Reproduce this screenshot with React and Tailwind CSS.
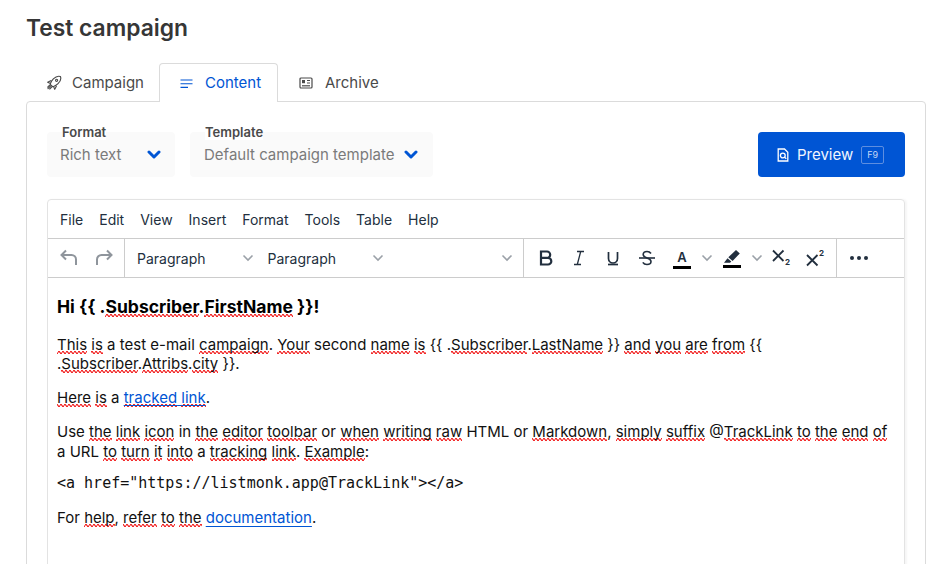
const Sp = ({ children }) => (
  <span className="bg-[url(data:image/svg+xml,%3Csvg%20xmlns=%27http://www.w3.org/2000/svg%27%20width=%274%27%20height=%273%27%3E%3Cpath%20d=%27M0%201.500Q1%20-.5%202%201.500T4%201.500%27%20fill=%27none%27%20stroke=%27%23f00000%27%20stroke-width=%271.1%27/%3E%3C/svg%3E)] bg-[length:4px_3px] bg-bottom bg-repeat-x">{children}</span>
);

function Field({ label, value, width, pad }) {
  return (
    <div className={`relative flex h-[45px] items-center justify-between rounded bg-[#fafafa] ${width} ${pad}`}>
      <span className="absolute left-[15px] top-[-8px] bg-white text-[13px] font-semibold leading-[16px] text-[#4a4a4a]">{label}</span>
      <span className="pt-[2px] text-[15px] text-[#7a7a7a]">{value}</span>
      <svg width="14" height="9" viewBox="0 0 14 9" fill="none" stroke="#0055d4" strokeWidth="3" strokeLinecap="round" strokeLinejoin="round">
        <path d="M2 2l5 5 5-5" />
      </svg>
    </div>
  );
}

function Caret({ cls = "" }) {
  return (
    <svg width="12" height="8" viewBox="0 0 12 8" className={cls} fill="none" stroke="#9ba1a8" strokeWidth="1.6">
      <path d="M1.500 1.500L6 6l4.500-4.500" />
    </svg>
  );
}

export default function App() {
  return (
    <div className="h-[564px] overflow-hidden bg-white font-['Inter',sans-serif] text-[#363636]">
      <div className="pl-[26px] pr-[16px] pt-[13px]">
        <h1 className="text-[22.8px] font-semibold leading-[30px]">Test campaign</h1>
        <div className="mt-[20px] flex h-[38px] items-stretch">
          <div className="flex w-[133px] items-center gap-[10px] pl-[20px] pt-[2px] text-[15px] text-[#4a4a4a]">
            <svg width="16" height="16" viewBox="0 0 24 24" fill="none" stroke="#4a4a4a" strokeWidth="1.700" strokeLinejoin="round" strokeLinecap="round">
              <path d="M21.610 2.390C21.610 2.390 16.660 .269 11 5.930C8.810 8.120 7.500 10.530 6.650 12.640C6.370 13.390 6.560 14.210 7.110 14.770L9.240 16.890C9.790 17.450 10.610 17.630 11.360 17.350C13.500 16.530 15.880 15.190 18.070 13C23.730 7.340 21.610 2.390 21.610 2.390Z" />
              <path d="M7 8.500L2.500 10.900 5.800 12.300M15.500 17L13.100 21.500 11.700 18.200" />
              <circle cx="15.900" cy="8" r="1.600" />
              <path d="M7 16.300L3 20.300M8.500 18L5.500 21M5.500 15.200L2.500 18.200" />
            </svg>
            <span>Campaign</span>
          </div>
          <div className="relative z-10 flex h-[39px] w-[119px] items-center gap-[12px] rounded-t border border-b-0 border-[#dbdbdb] bg-white pl-[20px] pt-[1px] text-[15px] text-[#0055d4]">
            <svg width="13" height="14" viewBox="0 0 13 14" stroke="#0055d4" strokeWidth="1.100"><path d="M0.500 3h12M0.500 6.700h12M0.500 10.400h7.500" /></svg>
            <span>Content</span>
          </div>
          <div className="flex items-center gap-[12px] pl-[21px] pt-[2px] text-[15px] text-[#4a4a4a]">
            <svg width="14" height="14" viewBox="0 0 14 14" fill="none" stroke="#4a4a4a" strokeWidth="1.200">
              <rect x="1" y="2" width="12" height="10" rx="1" />
              <path d="M3 9.800h8" />
              <path d="M8 4.500h3M8 7h3" />
              <rect x="3" y="4" width="3" height="3.200" fill="#4a4a4a" stroke="none" />
            </svg>
            <span>Archive</span>
          </div>
        </div>
        <div className="h-[470px] w-[900px] rounded-t border border-[#dbdbdb] pl-[20px] pr-[20px] pt-[30px]">
          <div className="flex items-start">
            <Field label="Format" value="Rich text" width="w-[128px]" pad="pl-[13px] pr-[14px]" />
            <div className="w-[15px]" />
            <Field label="Template" value="Default campaign template" width="w-[243px]" pad="pl-[14px] pr-[15px]" />
            <button className="ml-auto flex h-[45px] w-[147px] items-center rounded bg-[#0055d4] pl-[19px] text-[15px] text-[#f0f5ff]">
              <svg width="12" height="14" viewBox="0 0 12 14" fill="none" stroke="#ffffff" strokeWidth="1.300">
                <path d="M1.200 1h6.300l3.300 3.200v8.800H1.200z" />
                <circle cx="5.800" cy="7.500" r="2.400" />
                <path d="M7.500 9.200l1.800 1.600" />
              </svg>
              <span className="ml-[8px] pt-[1px]">Preview</span>
              <span className="ml-[8px] flex h-[18px] w-[23px] items-center justify-center rounded-[2px] border border-[#5d8ee0] text-[9px] text-[#c4d7f5]">F9</span>
            </button>
          </div>
          <div className="mt-[22px] h-[400px] rounded-t border border-[#e3e3e3] shadow-[2px_0_2px_rgba(0,0,0,0.04)]">
            <div className="flex h-[38px] items-center gap-[16px] pl-[12px] text-[14px] text-[#222f3e]">
              <span>File</span>
              <span>Edit</span>
              <span>View</span>
              <span>Insert</span>
              <span>Format</span>
              <span>Tools</span>
              <span>Table</span>
              <span>Help</span>
            </div>
            <div className="flex h-[40px] items-center border-y border-[#cccccc] text-[14px] text-[#222f3e]">
              <div className="flex h-full w-[77px] items-center gap-[11px] border-r border-[#cccccc] pl-[9px]">
                <svg width="24" height="24" viewBox="0 0 24 24" fill="none" stroke="#8f959c" strokeWidth="2"><path d="M9 4.500L4.500 9 9 13.500" /><path d="M5 9h9.500a4.500 4.500 0 0 1 4.500 4.500V19" /></svg>
                <svg width="24" height="24" viewBox="0 0 24 24" fill="none" stroke="#8f959c" strokeWidth="2"><path d="M15 4.500L19.500 9 15 13.500" /><path d="M19 9H9.500A4.500 4.500 0 0 0 5 13.500V19" /></svg>
              </div>
              <div className="flex h-full w-[399px] items-center border-r border-[#cccccc] pl-[12px] pr-[10px]">
                <span>Paragraph</span>
                <Caret cls="ml-[36px]" />
                <span className="ml-[14px]">Paragraph</span>
                <Caret cls="ml-[36px]" />
                <Caret cls="ml-auto" />
              </div>
              <div className="flex h-full w-[313px] items-center border-r border-[#cccccc] pl-[5px]">
                <span className="flex w-[33px] justify-center"><svg width="16" height="18" viewBox="0 0 16 18" fill="none" stroke="#222f3e" strokeWidth="2.200"><path d="M3 2.500h6a3.200 3.200 0 0 1 0 6.400H3zM3 8.900h7a3.300 3.300 0 0 1 0 6.600H3z" /></svg></span>
                <span className="flex w-[34px] justify-center"><svg width="14" height="18" viewBox="0 0 14 18" fill="none" stroke="#222f3e" strokeWidth="1.300"><path d="M5 2.500h7M2 15.500h7M8.700 2.500L5.300 15.500" /></svg></span>
                <span className="flex w-[34px] justify-center"><svg width="14" height="18" viewBox="0 0 14 18" fill="none" stroke="#222f3e" strokeWidth="1.700"><path d="M2.500 3v6.500a4.500 4.500 0 0 0 9 0V3" /><path d="M2 15.500h10" /></svg></span>
                <span className="flex w-[34px] justify-center"><svg width="18" height="18" viewBox="0 0 18 18" fill="none" stroke="#222f3e" strokeWidth="1.600"><path d="M13 4.500C12 3 10.500 2.500 9 2.500c-2.200 0-3.800 1-3.800 3 0 1.700 1.400 2.600 3.800 3.500 2.600.9 4 1.800 4 3.500 0 2-1.700 3-4 3-1.800 0-3.300-.7-4.200-2.200" /><path d="M1 9h16" /></svg></span>
                <span className="ml-[9px] flex w-[18px] flex-col items-center pt-[2px]">
                  <span className="text-[13px] font-semibold leading-[15px]">A</span>
                  <span className="mt-[1px] h-[3px] w-[18px] bg-black" />
                </span>
                <Caret cls="ml-[10px]" />
                <span className="ml-[10px] flex w-[18px] flex-col items-center pt-[2px]">
                  <svg width="18" height="14" viewBox="0 0 18 14" fill="#222f3e"><path d="M13 0l3.800 3.400-7.200 7.600-4.300-3.700zM4.500 8.300l3.800 3.300-1.200 1.200H1z" /></svg>
                  <span className="mt-[1px] h-[3px] w-[18px] bg-black" />
                </span>
                <Caret cls="ml-[10px]" />
                <svg width="20" height="18" viewBox="0 0 20 18" className="ml-[9px]" fill="none" stroke="#222f3e" strokeWidth="1.800"><path d="M1 1.500l10.500 10.500M11.500 1.500L1 12" /><text x="13" y="16" fontSize="8" fontWeight="700" fill="#222f3e" stroke="none">2</text></svg>
                <svg width="20" height="18" viewBox="0 0 20 18" className="ml-[14px]" fill="none" stroke="#222f3e" strokeWidth="1.800"><path d="M1 6l10.500 10.500M11.500 6L1 16.500" /><text x="13" y="7" fontSize="8" fontWeight="700" fill="#222f3e" stroke="none">2</text></svg>
              </div>
              <div className="flex h-full items-center gap-[3px] pl-[13px]">
                <span className="h-[4px] w-[4px] rounded-full bg-[#222f3e]" />
                <span className="h-[4px] w-[4px] rounded-full bg-[#222f3e]" />
                <span className="h-[4px] w-[4px] rounded-full bg-[#222f3e]" />
              </div>
            </div>
            <div className="px-[9px] pt-[17px] text-[15px] leading-[19px] text-[#111]">
              <p className="text-[17.550px] font-bold leading-[23px] text-black">Hi {"{{"} .<Sp>Subscriber</Sp>.<Sp>FirstName</Sp> {"}}"}!</p>
              <p className="mt-[17px]">
                <Sp>This</Sp> <Sp>is</Sp> a test e-mail <Sp>campaign</Sp>. <Sp>Your</Sp> second <Sp>name</Sp> <Sp>is</Sp> {"{{"} .<Sp>Subscriber</Sp>.<Sp>LastName</Sp> {"}}"} <Sp>and</Sp> <Sp>you</Sp> <Sp>are</Sp> <Sp>from</Sp> {"{{"}<br />
                .<Sp>Subscriber</Sp>.<Sp>Attribs</Sp>.<Sp>city</Sp> {"}}"}.
              </p>
              <p className="mt-[15px]">
                <Sp>Here</Sp> <Sp>is</Sp> a <a className="text-[#0055d4] underline decoration-[#0055d4] underline-offset-2"><Sp>tracked</Sp> <Sp>link</Sp></a>.
              </p>
              <p className="mt-[14.500px] leading-[20px]">
                Use <Sp>the</Sp> <Sp>link</Sp> <Sp>icon</Sp> in <Sp>the</Sp> <Sp>editor</Sp> <Sp>toolbar</Sp> or <Sp>when</Sp> <Sp>writing</Sp> <Sp>raw</Sp> HTML or <Sp>Markdown</Sp>, <Sp>simply</Sp> <Sp>suffix</Sp> @<Sp>TrackLink</Sp> <Sp>to</Sp> <Sp>the</Sp> <Sp>end</Sp> <Sp>of</Sp><br />
                a URL <Sp>to</Sp> <Sp>turn</Sp> <Sp>it</Sp> <Sp>into</Sp> a <Sp>tracking</Sp> <Sp>link</Sp>. <Sp>Example</Sp>:
              </p>
              <p className="mt-[12px] font-['DejaVu_Sans_Mono',monospace] text-[15px] leading-[19.500px]">{'<a href="https://listmonk.app@TrackLink"></a>'}</p>
              <p className="mt-[15px]">
                For <Sp>help</Sp>, <Sp>refer</Sp> <Sp>to</Sp> <Sp>the</Sp> <a className="text-[#0055d4] underline decoration-[#0055d4] underline-offset-[3px]">documentation</a>.
              </p>
            </div>
          </div>
        </div>
      </div>
    </div>
  );
}
